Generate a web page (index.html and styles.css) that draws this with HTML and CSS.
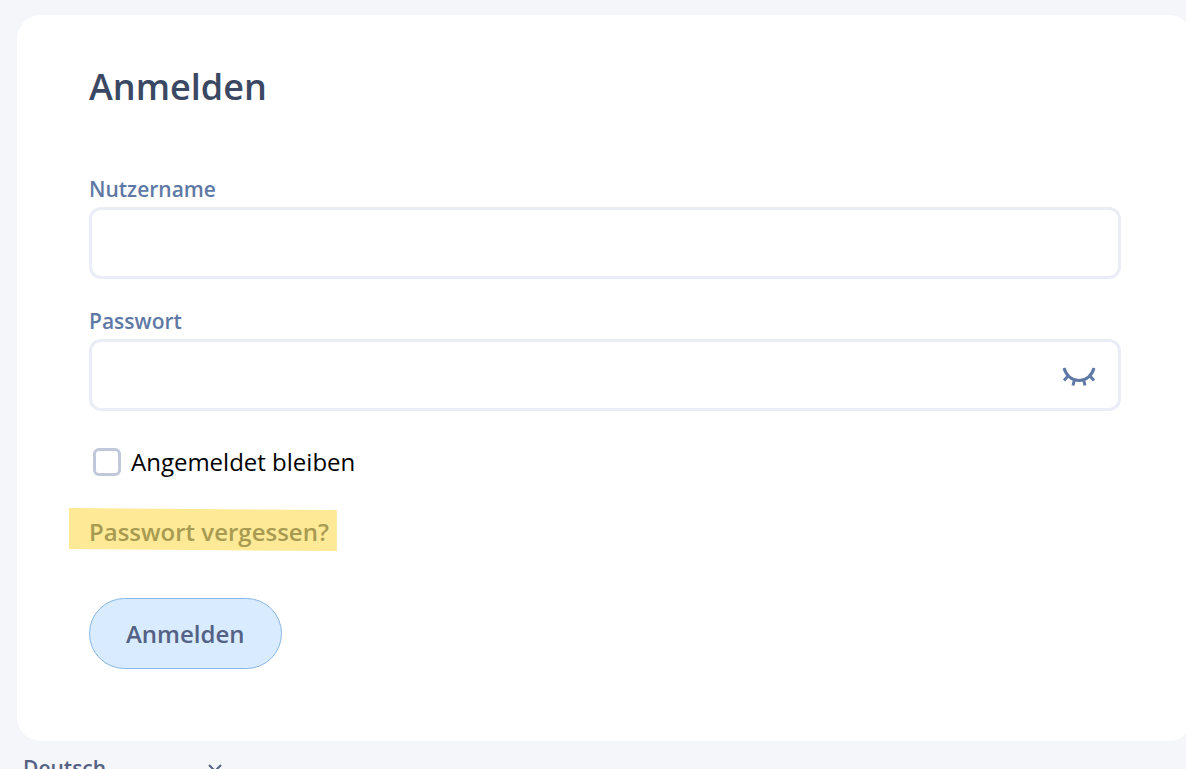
FILE: index.html
```html
<!DOCTYPE html>
<html lang="de">
  <head>
    <meta charset="UTF-8" />
    <meta name="viewport" content="width=device-width, initial-scale=1.0" />
    <title>Anmelden</title>
    <link rel="stylesheet" href="styles.css">
  </head>
  <body>
    <main class="login-card">
      <h1>Anmelden</h1>

      <form id="login-form">
        <div class="form-group">
          <label for="username">Nutzername</label>
          <input type="text" id="username" name="username" />
        </div>

        <div class="form-group">
          <label for="password">Passwort</label>
          <div class="password-field">
            <input type="password" id="password" name="password" />
            <button type="button" class="toggle-password" aria-label="Passwort anzeigen">
              <svg width="34" height="20" viewBox="0 0 34 20" fill="none" stroke="currentColor" stroke-width="3">
                <path d="M2 1C4 8.500 10 13.500 17 13.500S30 8.500 32 1" />
                <path d="M6.500 8.500L2 13.500M12.500 12.500L11 18.500M21.500 12.500L23 18.500M27.500 8.500L32 13.500" />
              </svg>
            </button>
          </div>
        </div>

        <div class="remember">
          <input type="checkbox" id="remember" name="remember" />
          <label for="remember">Angemeldet bleiben</label>
        </div>

        <div class="forgot-password">
          <a href="/forgot-password">Passwort vergessen?</a>
        </div>

        <button type="submit" class="submit-button">Anmelden</button>
      </form>
    </main>

    <footer>
      <div class="language">
        <select id="language" name="language" aria-label="Sprache">
          <option>Deutsch</option>
          <option>English</option>
        </select>
        <svg width="16" height="10" viewBox="0 0 16 10" fill="none" stroke="currentColor" stroke-width="2">
          <path d="M2 2L8 8L14 2" />
        </svg>
      </div>
    </footer>
  </body>
</html>
```

FILE: styles.css
```css
* {
  box-sizing: border-box;
}
body {
  margin: 0;
  padding: 15px 0 0 17px;
  background-color: #f5f6fa;
  font-family: "Open Sans", "Noto Sans", sans-serif;
  overflow-x: hidden;
}
.login-card {
  position: relative;
  z-index: 0;
  margin-right: -7px;
  padding: 48px 72px 72px;
  background-color: white;
  border-radius: 24px;
}
h1 {
  margin: 0 0 62px;
  font-size: 36px;
  line-height: 48px;
  font-weight: 600;
  color: #3b4863;
}
.form-group {
  margin-bottom: 26px;
}
.form-group label {
  display: block;
  margin-bottom: 2px;
  font-size: 21px;
  line-height: 32px;
  font-weight: 600;
  color: #5f79a6;
}
.form-group input {
  display: block;
  width: 100%;
  height: 72px;
  padding: 0 20px;
  border: 3px solid #eaedf5;
  border-radius: 12px;
  background-color: white;
  font: inherit;
  font-size: 24px;
}
.password-field {
  position: relative;
}
.password-field input {
  padding-right: 80px;
}
.toggle-password {
  position: absolute;
  top: 18px;
  right: 20px;
  display: flex;
  align-items: center;
  justify-content: center;
  width: 44px;
  height: 40px;
  padding: 0;
  border: none;
  background: none;
  color: #5f79a6;
  cursor: pointer;
}
.remember {
  display: flex;
  align-items: center;
  gap: 10px;
  margin: 33px 0 34px 4px;
  font-size: 24px;
  line-height: 36px;
  color: black;
}
.remember input {
  appearance: none;
  width: 28px;
  height: 28px;
  margin: 0;
  border: 3px solid #c1c8da;
  border-radius: 6px;
  background-color: white;
}
.remember input:checked {
  background-color: #5f79a6;
}
.forgot-password {
  margin-bottom: 48px;
  font-size: 24px;
  line-height: 36px;
  font-weight: 600;
}
.forgot-password a {
  position: relative;
  display: inline-block;
  color: #a89b51;
  text-decoration: none;
}
/* marker stroke behind the link */
.forgot-password a::before {
  content: "";
  position: absolute;
  z-index: -1;
  inset: -6px -8px -1px -20px;
  background-color: #fee996;
  clip-path: polygon(0 0, 100% 2px, 100% 100%, 0 calc(100% - 2px));
}
.submit-button {
  display: block;
  height: 71px;
  padding: 0 36px;
  border: 1px solid #88b7e6;
  border-radius: 36px;
  background-color: #d9ebff;
  font: inherit;
  font-size: 24px;
  font-weight: 600;
  color: #536285;
  cursor: pointer;
}
footer {
  padding: 11px 6px;
}
.language {
  position: relative;
  width: 200px;
  color: #536285;
}
.language select {
  appearance: none;
  display: block;
  width: 100%;
  height: 32px;
  padding: 0;
  border: none;
  background: none;
  font: inherit;
  font-size: 21px;
  font-weight: 600;
  color: inherit;
}
.language svg {
  position: absolute;
  top: 11px;
  right: 0;
  pointer-events: none;
}
```
